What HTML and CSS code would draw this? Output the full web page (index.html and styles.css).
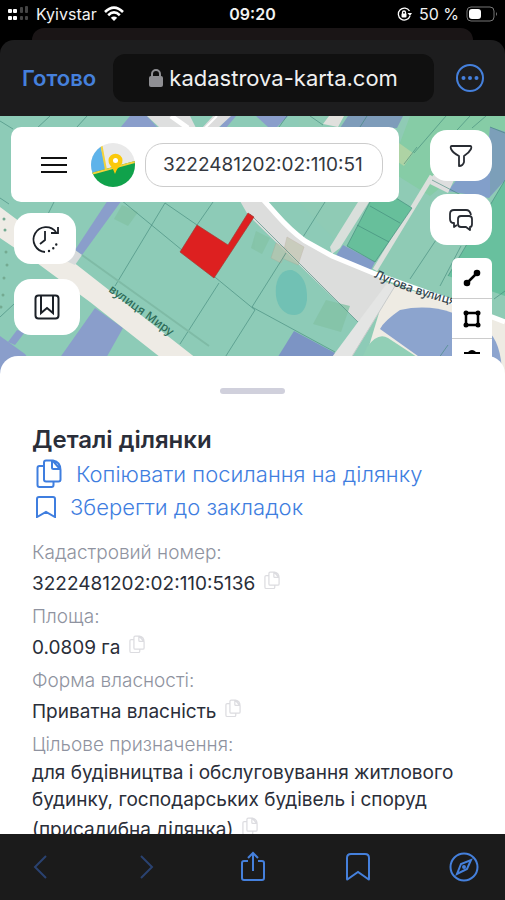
FILE: index.html
```html
<!DOCTYPE html>
<html lang="uk">
<head>
    <meta charset="UTF-8">
    <meta name="viewport" content="width=device-width, initial-scale=1.0">
    <title>Деталі ділянки</title>
    <link rel="stylesheet" href="styles.css">
</head>
<body>
    <!-- icons used more than once -->
    <svg class="sprite" aria-hidden="true">
        <symbol id="copy" viewBox="0 0 26 30">
            <path d="M8 7H3.500Q1.500 7 1.500 9V26Q1.500 28 3.500 28H15.500Q17.500 28 17.500 26V22.500"/>
            <path d="M10 1.500H17Q24.500 3 24.500 11V20.500Q24.500 22.500 22.500 22.500H10Q8 22.500 8 20.500V3.500Q8 1.500 10 1.500ZM16 2V8.500Q16 10 17.500 10H24M17 2L24 10"/>
        </symbol>
    </svg>

    <div class="status">
        <div class="status-left">
            <svg width="22" height="16" viewBox="0 0 22 16" fill="#fff">
                <rect x="1" y="3" width="4" height="4" rx="1"/><rect x="6" y="3" width="4" height="4" rx="1"/>
                <rect x="1" y="10" width="4" height="4" rx="1"/><rect x="6" y="10" width="4" height="4" rx="1"/>
                <g fill="#444"><rect x="13" y="1" width="3" height="6" rx="1"/><rect x="18" y="0" width="3" height="7" rx="1"/>
                <rect x="13" y="10" width="3" height="4" rx="1"/><rect x="18" y="10" width="3" height="4" rx="1"/></g>
            </svg>
            <span>Kyivstar</span>
            <svg width="20" height="16" viewBox="0 0 20 16" fill="none" stroke="#fff" stroke-width="2.600">
                <path d="M1 6Q10-3 19 6M4.200 9.200Q10 3.500 15.800 9.200"/>
                <path d="M6.800 11.800Q10 9 13.200 11.800L10 15Z" fill="#fff" stroke="none"/>
            </svg>
        </div>
        <b class="time">09:20</b>
        <div class="status-right">
            <svg width="15" height="15" viewBox="0 0 15 15" fill="none" stroke="#fff" stroke-width="1.300">
                <path d="M12.500 4A6 6 0 1 0 13 9"/><path d="M10.500 6H15L13 9Z" fill="#fff" stroke="none"/>
                <rect x="4.500" y="6.500" width="5" height="4" rx="1" fill="#fff" stroke="none"/><path d="M5.500 7V5.500a1.500 1.500 0 0 1 3 0V7"/>
            </svg>
            <span>50 %</span>
            <svg width="32" height="16" viewBox="0 0 32 16" fill="none">
                <rect x="1" y="1" width="27" height="14" rx="4" stroke="#777"/>
                <rect x="3" y="3" width="12" height="10" rx="3" fill="#fff"/>
                <path d="M30 6Q32 8 30 10Z" fill="#777"/>
            </svg>
        </div>
    </div>

    <div class="card-behind"></div>
    <header class="browser">
        <button class="done">Готово</button>
        <div class="address">
            <svg width="14" height="18" viewBox="0 0 14 18">
                <rect y="7" width="14" height="11" rx="2" fill="#8f8f93"/>
                <path d="M3 8V5a4 4 0 0 1 8 0V8" fill="none" stroke="#8f8f93" stroke-width="2"/>
            </svg>
            <span>kadastrova-karta.com</span>
        </div>
        <button class="more" aria-label="Більше">
            <svg width="30" height="30" viewBox="0 0 30 30" fill="none" stroke="#4580dc" stroke-width="2">
                <circle cx="15" cy="15" r="13"/>
                <g fill="#4580dc" stroke="none"><circle cx="8.500" cy="15" r="2"/><circle cx="15" cy="15" r="2"/><circle cx="21.500" cy="15" r="2"/></g>
            </svg>
        </button>
    </header>

    <main class="map">
        <svg class="map-canvas" viewBox="0 0 505 260" preserveAspectRatio="xMidYMin slice">
            <rect width="505" height="260" fill="#8dcbb7"/>
            <path d="M299 86V0H505V260H380L350 140Z" fill="#8fcbb5"/>
            <path d="M398 32L410 0H505V20L430 80L398 60Z" fill="#86cca6"/>
            <path d="M399 27L413 37L404 50L398 46Z" fill="#aed3a4"/>
            <path d="M505 64L448 160L505 180Z" fill="#68c09e"/>
            <g fill="#8a9ecb">
                <path d="M130 0H147L158 12H120Z"/><path d="M229 0H236L226 12H219Z"/>
                <path d="M108 84H122L82 139L75 134Z"/>
                <path d="M95 192L123 212L96 260H47Z"/>
                <path d="M0 220L25 238L40 260H0Z"/><path d="M17 214L25 216L15 229L8 226Z"/>
                <path d="M256 0H288L277 11H268Z"/><path d="M348 0H403L397 12H340Z" fill="#7e9cba"/>
                <path d="M343 129L375 146L370 156L335 141Z" fill="#829bc8"/>
                <path d="M294 215L335 237L325 260H266Z" fill="#7c94c4"/>
            </g>
            <path d="M490 11L505 16V64L489 82L448 75L458 62H485Z" fill="#829fca"/>
            <path d="M490 11L505 16V64L490 80Z" fill="#7c9fb9"/>
            <path d="M0 91L35 117L77 149L192 239L220 260H184L90 186L37 147L0 122Z" fill="#eeebe5"/>
            <path d="M75 134L82 139L75 149L66 145Z" fill="#d8dbdc"/>
            <path d="M147 0H190L196 12H160Z" fill="#dedfdf"/><path d="M171 0L188 12" stroke="#fff" stroke-width="5"/>
            <path d="M213 0H231L218 12H202Z" fill="#ddd"/><path d="M217 0L205 12" stroke="#fff" stroke-width="2"/>
            <path d="M329 0H344L338 11L323 8Z" fill="#e0e0dd"/>
            <path d="M240 85H262L300 122L340 142L373 158L392 170L358 206L248 99Z" fill="#dcdddc"/>
            <path d="M388 167L505 204V260H360Z" fill="#eeebe3"/>
            <path d="M388 166L395 170L340 260H318L358 206Z" fill="#e4e5e4"/>
            <path d="M395 170L340 260" stroke="#c8cbcb"/>
            <path d="M380 213Q384 205 400 194Q428 188 453 197L486 213Q502 226 502 260H446Z" fill="#8ca4ce"/>
            <path d="M354 260L367 231Q378 216 388 222L446 260Z" fill="#91cfb6"/>
            <path d="M358 86H369L340 132L332 138L330 131Z" fill="#d9dfdb"/>
            <path d="M432 60L375 154" stroke="#dce0dc" stroke-width="5"/>
            <path d="M433 59L455 62L448 77L430 68Z" fill="#dedede"/>
            <path d="M370 86L396 82L412 92L375 146L347 130Z" fill="#67bf9b"/>
            <g fill="#84c3a6" opacity=".8"><path d="M326 184L350 190L341 216L313 208Z"/><path d="M122 89L138 96L128 110L114 103Z"/><path d="M256 115L270 122L262 138L251 132Z"/></g>
            <g fill="#c0c4ae" opacity=".65" stroke="#b7a794" stroke-width=".5"><path d="M287 121L304 131L298 149L282 142Z"/><path d="M276 127L287 133L281 147L271 142Z"/></g>
            <path d="M292 154Q308 160 307 184Q304 203 288 198Q274 191 276 170Q279 153 292 154Z" fill="#71c1b4"/>
            <!-- parcel borders -->
            <g fill="none" stroke="#3f8778" stroke-width=".6">
                <path d="M0 5L13 13M50 0L36 13M87 0L77 11M121 84L255 194M165 87L197 109M165 87L115 170M213 86L197 109M219 167L180 228M255 194L224 243M55 84L48 98M0 82L9 88"/>
                <path d="M0 201L14 188M252 191L335 236M286 137L252 191M250 98L358 206M325 86L303 121"/>
                <path d="M287 0L279 11M310 0L323 9M367 0L360 11M414 37L446 0M404 48L417 31M446 26L470 0M472 12L486 0M490 11L505 17M432 64L461 79M458 91L410 163M461 130L440 170M505 64L448 160M494 183L505 175"/>
                <path d="M370 86L347 130L375 146L412 92L396 82M370 90L400 107M357 109L389 126M448 229L436 246"/>
            </g>
            <path d="M82 139L209 230" stroke="#7fbba6" stroke-width="2"/>
            <path d="M260 80L276 98Q290 114 305 125L332 140L373 157L440 181L505 206" fill="none" stroke="#fff" stroke-width="5"/>
            <path d="M197 109L228 129L248 97L254 101L214 162L180 136Z" fill="#dd2020" stroke="#a43b32" stroke-width=".7"/>
            <g fill="#74aa91"><circle cx="4" cy="103" r="1.500"/><circle cx="5" cy="114" r="1.500"/><circle cx="6" cy="136" r="1.500"/><circle cx="7" cy="149" r="1.500"/><circle cx="4" cy="162" r="1.500"/><circle cx="3" cy="179" r="1.500"/><circle cx="1" cy="191" r="1.500"/></g>
            <text class="street" transform="translate(108 175) rotate(36)">вулиця Миру</text>
            <path id="luhova" d="M374 161Q412 180 480 195" fill="none"/>
            <text class="street dark"><textPath href="#luhova">Лугова вулиця</textPath></text>
        </svg>

        <div class="map-ui">
            <div class="map-left">
                <div class="search">
                    <button class="plain" aria-label="Меню">
                        <svg width="26" height="18" viewBox="0 0 26 18" stroke="#111" stroke-width="2"><path d="M0 2H26M0 9H26M0 16H26"/></svg>
                    </button>
                    <svg class="logo" width="44" height="44" viewBox="0 0 44 44">
                        <clipPath id="round"><circle cx="22" cy="22" r="22"/></clipPath>
                        <g clip-path="url(#round)">
                            <rect width="44" height="44" fill="#e9e9e9"/>
                            <path d="M0 0H9L15 27L0 31Z" fill="#5eb3ea"/>
                            <path d="M0 30L44 18V44H0Z" fill="#10a24b"/>
                            <path d="M10 0L15 27M0 31L44 19" stroke="#f4d33b" stroke-width="2"/>
                            <path d="M24 31Q22 25 19 22A7 7 0 1 1 30 22Q26 25 24 31Z" fill="#fbc90b"/>
                            <circle cx="24.500" cy="17.500" r="2.500" fill="#fff"/>
                        </g>
                    </svg>
                    <input class="search-input" type="text" value="3222481202:02:110:51" aria-label="Кадастровий номер">
                </div>
                <button class="map-btn" aria-label="Історія">
                    <svg width="30" height="30" viewBox="0 0 30 30" fill="none" stroke="#1b2027" stroke-width="1.800">
                        <path d="M15 28A12.500 12.500 0 1 1 26 8M28 3V9H21M15 7V16L10 20"/>
                        <path d="M19 27Q26 24 28 16" stroke-width="2.400" stroke-linecap="round" stroke-dasharray="0 5"/>
                    </svg>
                </button>
                <button class="map-btn large" aria-label="Закладки">
                    <svg width="26" height="26" viewBox="0 0 26 26" fill="none" stroke="#1b2027" stroke-width="2">
                        <rect x="1.500" y="1.500" width="23" height="23" rx="3"/><path d="M7 2V19L13 14L19 19V2"/>
                    </svg>
                </button>
            </div>
            <div class="map-right">
                <button class="map-btn" aria-label="Фільтр">
                    <svg width="24" height="24" viewBox="0 0 24 24" fill="none" stroke="#282c33" stroke-width="1.800" stroke-linejoin="round">
                        <path d="M3 2H21Q23 2 22 5Q20 9 15 12V18Q14 22 10 22V12Q4 9 2 5Q1 2 3 2Z"/>
                    </svg>
                </button>
                <button class="map-btn" aria-label="Чат">
                    <svg width="26" height="24" viewBox="0 0 26 24" fill="none" stroke="#282c33" stroke-width="1.800" stroke-linejoin="round">
                        <path d="M9 17L6 19V15Q2 15 2 11V6Q2 2 6 2H18Q22 2 23 7"/>
                        <path d="M13 8H21Q24 8 24 11V16Q24 19 22 19V22L18 19H13Q10 19 10 16V11Q10 8 13 8Z"/>
                    </svg>
                </button>
                <div class="draw-tools">
                    <button aria-label="Лінія">
                        <svg width="18" height="18" viewBox="0 0 18 18"><path d="M3 15L15 3" stroke="#000" stroke-width="2.500"/><circle cx="4" cy="14" r="3.300"/><circle cx="14" cy="4" r="3.300"/></svg>
                    </button>
                    <button aria-label="Полігон">
                        <svg width="18" height="18" viewBox="0 0 18 18"><path d="M3 3H15V15H3Z" fill="none" stroke="#000" stroke-width="2.500"/><circle cx="3" cy="3" r="2.500"/><circle cx="15" cy="3" r="2.500"/><circle cx="3" cy="15" r="2.500"/><circle cx="15" cy="15" r="2.500"/></svg>
                    </button>
                    <button aria-label="Видалити">
                        <svg width="18" height="20" viewBox="0 0 18 20"><path d="M1 3H5Q9-1 13 3H17V5H1ZM2 7H16L14 19H4Z"/></svg>
                    </button>
                </div>
            </div>
        </div>
    </main>

    <section class="sheet">
        <div class="handle"></div>
        <h1>Деталі ділянки</h1>
        <button class="action">
            <svg width="26" height="30"><use href="#copy"/></svg>
            Копіювати посилання на ділянку
        </button>
        <button class="action save">
            <svg width="20" height="22" viewBox="0 0 20 22"><path d="M1 3Q1 1 3 1H17Q19 1 19 3V21L10 16L1 21Z"/></svg>
            Зберегти до закладок
        </button>

        <dl class="details">
            <dt>Кадастровий номер:</dt>
            <dd>3222481202:02:110:5136 <button class="copy" aria-label="Копіювати"><svg width="16" height="19"><use href="#copy"/></svg></button></dd>
            <dt>Площа:</dt>
            <dd>0.0809 га <button class="copy" aria-label="Копіювати"><svg width="16" height="19"><use href="#copy"/></svg></button></dd>
            <dt>Форма власності:</dt>
            <dd>Приватна власність <button class="copy" aria-label="Копіювати"><svg width="16" height="19"><use href="#copy"/></svg></button></dd>
            <dt>Цільове призначення:</dt>
            <dd>для будівництва і обслуговування житлового будинку, господарських будівель і споруд (присадибна ділянка) <button class="copy" aria-label="Копіювати"><svg width="16" height="19"><use href="#copy"/></svg></button></dd>
        </dl>
    </section>

    <nav class="toolbar">
        <button class="dim" aria-label="Назад" disabled><svg width="30" height="30" viewBox="0 0 30 30"><path d="M20 4L9 15L20 26"/></svg></button>
        <button class="dim" aria-label="Вперед" disabled><svg width="30" height="30" viewBox="0 0 30 30"><path d="M9 4L20 15L9 26"/></svg></button>
        <button aria-label="Поділитися"><svg width="30" height="32" viewBox="0 0 30 32"><path d="M10 10H6Q4 10 4 12V27Q4 29 6 29H24Q26 29 26 27V12Q26 10 24 10H20M15 20V2M10 7L15 2L20 7"/></svg></button>
        <button aria-label="Закладки"><svg width="30" height="30" viewBox="0 0 30 30"><path d="M4 27V6Q4 2 8 2H22Q26 2 26 6V27Q26 28 25 27L15 20L5 27Q4 28 4 27Z"/></svg></button>
        <button aria-label="Відкрити в Safari"><svg width="30" height="30" viewBox="0 0 30 30"><circle cx="15" cy="15" r="13.500"/><path d="M22 8L18 17L8 22L12 12Z"/><circle cx="15" cy="15" r="1"/></svg></button>
    </nav>
</body>
</html>
```
FILE: styles.css
```css
* {
    box-sizing: border-box;
}
body {
    margin: 0;
    height: 100vh;
    display: flex;
    flex-direction: column;
    overflow: hidden;
    background: #000;
    font-family: Inter, "Noto Sans", sans-serif;
    color: #2a2e39;
}
button {
    padding: 0;
    border: none;
    background: none;
    font: inherit;
    color: inherit;
    cursor: pointer;
}
svg {
    display: block;
    flex: none;
}
.sprite {
    position: absolute;
    width: 0;
    height: 0;
}

/* phone status bar */
.status {
    height: 28px;
    flex: none;
    display: grid;
    grid-template-columns: 1fr auto 1fr;
    align-items: center;
    padding: 0 7px;
    color: #f2f2f2;
    font-size: 16px;
}
.status-left,
.status-right {
    display: flex;
    align-items: center;
    gap: 7px;
}
.status-right {
    justify-content: flex-end;
}
.time {
    font-weight: 600;
}

/* browser header */
.card-behind {
    height: 12px;
    flex: none;
    margin: 0 32px;
    border-radius: 24px 24px 0 0;
    background: #1a1516;
}
.browser {
    height: 76px;
    flex: none;
    display: flex;
    align-items: center;
    gap: 17px;
    padding: 0 20px 0 22px;
    border-radius: 14px 14px 0 0;
    background: #1d1d1e;
}
.done {
    color: #4580dc;
    font-size: 22px;
    font-weight: 600;
}
.address {
    flex: 1;
    height: 48px;
    display: flex;
    align-items: center;
    justify-content: center;
    gap: 6px;
    margin-right: 4px;
    border-radius: 12px;
    background: #101010;
    color: #f0f0f0;
    font-size: 22px;
}

/* map */
.map {
    position: relative;
    height: 260px;
    flex: none;
    overflow: hidden;
}
.map-canvas {
    position: absolute;
    width: 100%;
    height: 100%;
}
.street {
    font: 500 12px "Noto Sans", sans-serif;
    fill: #2e6b58;
}
.street.dark {
    fill: #34454e;
}
.map-ui {
    position: relative;
    display: flex;
    gap: 31px;
    padding: 11px 13px 0 11px;
}
.map-left {
    flex: 1;
    min-width: 0;
}
.map-left .map-btn {
    margin-left: 3px;
}
.search {
    height: 75px;
    display: flex;
    align-items: center;
    margin-bottom: 11px;
    padding: 0 16px 0 30px;
    border-radius: 10px;
    background: #fff;
}
.logo {
    margin: 0 10px 0 24px;
}
.search-input {
    flex: 1;
    min-width: 0;
    height: 44px;
    padding: 0 17px;
    border: 1px solid #ccc;
    border-radius: 18px;
    font: 19px Inter, sans-serif;
    color: #343840;
}
.map-btn {
    width: 62px;
    height: 51px;
    display: grid;
    place-items: center;
    border-radius: 17px;
    background: #fff;
}
.map-btn.large {
    width: 66px;
    height: 56px;
    margin-top: 15px;
}
.map-right {
    display: flex;
    flex-direction: column;
    align-items: flex-end;
    gap: 13px;
    padding-top: 3px;
}
.draw-tools {
    width: 40px;
    border-radius: 6px;
    background: #fff;
}
.draw-tools button {
    width: 100%;
    height: 40px;
    display: grid;
    place-items: center;
}
.draw-tools button + button {
    border-top: 1px solid #ccc;
}

/* details sheet */
.sheet {
    position: relative;
    flex: 1;
    min-height: 0;
    overflow: hidden;
    margin-top: -20px;
    padding: 32px 32px 0;
    border-radius: 18px 18px 0 0;
    background: #fff;
}
.handle {
    width: 65px;
    height: 6px;
    margin: 0 auto 30px;
    border-radius: 3px;
    background: #d0d0dc;
}
h1 {
    margin: 0;
    font-size: 24px;
    line-height: 32px;
    font-weight: 600;
}
.action {
    display: flex;
    align-items: center;
    gap: 14px;
    height: 36px;
    padding-left: 4px;
    color: #3f7edf;
    font-size: 22px;
    font-weight: 300;
}
.action.save {
    height: 30px;
}
.action svg {
    fill: none;
    stroke: currentColor;
    stroke-width: 2;
}
.details {
    margin: 17px 0 0;
    font-size: 19px;
    line-height: 27px;
}
dt {
    height: 28px;
    color: #8f93a0;
    font-weight: 300;
}
dd {
    margin: 0;
}
.copy {
    height: 36px;
    padding: 0 0 9px 3px;
    vertical-align: middle;
}
.copy svg {
    fill: none;
    stroke: #dcdce0;
    stroke-width: 2;
}

/* browser toolbar */
.toolbar {
    height: 66px;
    flex: none;
    display: flex;
    align-items: center;
    justify-content: space-between;
    padding: 0 26px;
    background: #1b1b1b;
}
.toolbar button {
    color: #4580dc;
}
.toolbar .dim {
    color: #2a4270;
}
.toolbar svg {
    fill: none;
    stroke: currentColor;
    stroke-width: 2;
}
```
